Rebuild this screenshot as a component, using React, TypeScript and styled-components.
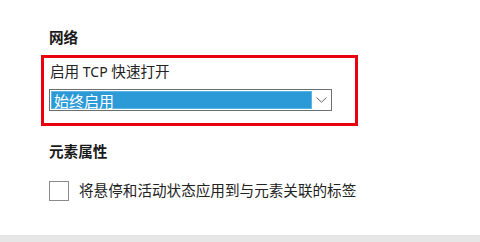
import React from "react";
import styled, { createGlobalStyle } from "styled-components";

const Global = createGlobalStyle`
  html, body { margin: 0; padding: 0; background: #ffffff; }
  body { font-family: "Noto Sans CJK SC", "Noto Sans", sans-serif; color: #1a1a1a; }
`;

const Page = styled.div`
  width: 480px;
  height: 242px;
  display: flex;
  flex-direction: column;
  overflow: hidden;
`;

const Content = styled.div`
  flex: 1;
  padding: 27px 0 0 49px;
  display: flex;
  flex-direction: column;
`;

const Heading = styled.div<{ $mt?: number }>`
  font-size: 14.6px;
  line-height: 20px;
  font-weight: 700;
  margin-top: ${(p) => p.$mt ?? 0}px;
`;

const Highlight = styled.div`
  margin: 8px 0 0 -8px;
  width: 317px;
  box-sizing: border-box;
  border: 3px solid #e8000e;
  padding: 3px 0 12px 5px;
  display: flex;
  flex-direction: column;
  gap: 7px;
`;

const Label = styled.div`
  font-size: 14.6px;
  line-height: 20px;
  padding-left: 1px;
  color: #222;
  white-space: pre;
`;

const Latin = styled.span`
  font-family: "Noto Sans", "Liberation Sans", sans-serif;
  font-size: 14px;
`;

const Select = styled.div`
  width: 283px;
  height: 22px;
  box-sizing: border-box;
  border: 1px solid #6e6e6e;
  background: #fff;
  padding: 1px;
  display: flex;
`;

const Selected = styled.div`
  flex: 1;
  background: #2b9ad7;
  color: #fff;
  font-size: 15px;
  line-height: 17px;
  padding-left: 2px;
  border: 1px solid #5fb4e3;
  box-sizing: border-box;
`;

const Arrow = styled.div`
  width: 18px;
  display: flex;
  align-items: center;
  justify-content: center;
`;

const Row = styled.div`
  margin-top: 20px;
  display: flex;
  align-items: center;
  gap: 10px;
`;

const Box = styled.div`
  width: 20px;
  height: 20px;
  box-sizing: border-box;
  border: 1px solid #8a8a8a;
  background: #fff;
`;

const RowText = styled.div`
  font-size: 14.6px;
  line-height: 20px;
  color: #222;
  margin-top: -2px;
`;

const BottomBar = styled.div`
  height: 7px;
  background: #e6e6e6;
`;

export default function App() {
  return (
    <Page>
      <Global />
      <Content>
        <Heading>网络</Heading>
        <Highlight>
          <Label>
            启用<Latin> TCP </Latin>快速打开
          </Label>
          <Select>
            <Selected>始终启用</Selected>
            <Arrow>
              <svg width="11" height="6" viewBox="0 0 11 6">
                <path d="M0.5 0.5 L5.5 5.2 L10.5 0.5" fill="none" stroke="#666" strokeWidth="1" />
              </svg>
            </Arrow>
          </Select>
        </Highlight>
        <Heading $mt={15}>元素属性</Heading>
        <Row>
          <Box />
          <RowText>将悬停和活动状态应用到与元素关联的标签</RowText>
        </Row>
      </Content>
      <BottomBar />
    </Page>
  );
}
